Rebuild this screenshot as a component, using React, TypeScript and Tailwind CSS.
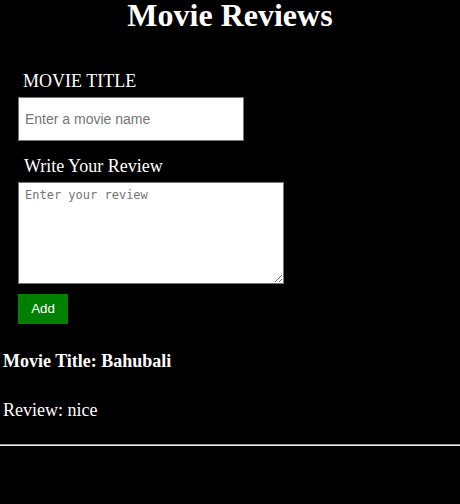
import React from "react";

export default function App() {
  return (
    <div className="bg-black min-h-[504px] w-full text-white font-['Liberation_Serif','Times_New_Roman',serif]">
      <h1 className="m-0 text-center text-[32px] font-bold leading-[30px]">Movie Reviews</h1>
      <div className="flex flex-col items-start pl-[18px] pt-[41px]">
        <label className="ml-[5px] text-[18px] leading-[20px]">MOVIE TITLE</label>
        <input
          type="text"
          placeholder="Enter a movie name"
          className="mt-[6px] h-[44px] w-[226px] border border-[#767676] bg-white px-[6px] text-[14px] text-black placeholder:text-[#757575] font-['Liberation_Sans',Arial,sans-serif] outline-none"
        />
        <label className="ml-[6px] mt-[15px] text-[18px] leading-[20px]">Write Your Review</label>
        <textarea
          placeholder="Enter your review"
          className="mt-[6px] h-[102px] w-[266px] resize border border-[#767676] bg-white px-[6px] pt-[5px] text-[12px] leading-[14px] text-black placeholder:text-[#757575] font-['DejaVu_Sans_Mono',monospace] outline-none"
        />
        <button className="mt-[10px] h-[30px] w-[50px] bg-[#008000] text-[13.33px] text-white font-['Liberation_Sans',Arial,sans-serif]">
          Add
        </button>
      </div>
      <div className="pl-[3px]">
        <h3 className="mt-[27px] text-[18px] font-bold leading-[20px]">Movie Title: Bahubali</h3>
        <p className="mt-[29px] text-[18px] leading-[20px]">Review: nice</p>
      </div>
      <hr className="mt-[24px] h-0 border-t border-b border-t-[#9a9a9a] border-b-[#eeeeee]" />
    </div>
  );
}
